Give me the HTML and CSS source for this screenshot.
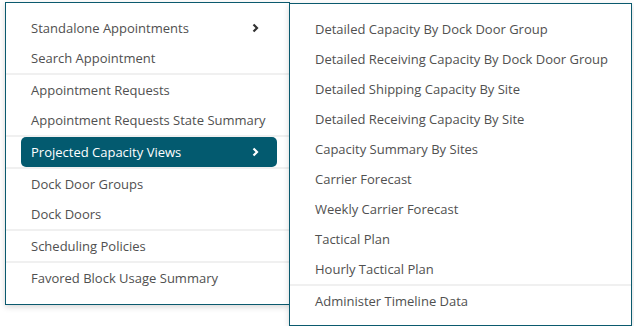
FILE: index.html
```html
<!DOCTYPE html>
<html lang="en">
<head>
    <meta charset="UTF-8">
    <meta name="viewport" content="width=device-width, initial-scale=1.0">
    <title>Appointments Menu</title>
    <link rel="stylesheet" href="styles.css">
</head>
<body>
    <div class="menu-wrap">
        <div class="menu main-menu">
            <div class="menu-group">
                <div class="menu-item">Standalone Appointments
                    <svg class="chevron" width="7" height="10" viewBox="0 0 7 10"><path d="M1.5 1.5 L5 5 L1.5 8.5" /></svg>
                </div>
                <div class="menu-item">Search Appointment</div>
            </div>
            <div class="menu-group">
                <div class="menu-item">Appointment Requests</div>
                <div class="menu-item">Appointment Requests State Summary</div>
            </div>
            <div class="menu-group">
                <div class="menu-item active">Projected Capacity Views
                    <svg class="chevron" width="7" height="10" viewBox="0 0 7 10"><path d="M1.5 1.5 L5 5 L1.5 8.5" /></svg>
                </div>
            </div>
            <div class="menu-group">
                <div class="menu-item">Dock Door Groups</div>
                <div class="menu-item">Dock Doors</div>
            </div>
            <div class="menu-group">
                <div class="menu-item">Scheduling Policies</div>
            </div>
            <div class="menu-group">
                <div class="menu-item">Favored Block Usage Summary</div>
            </div>
        </div>

        <!-- submenu for Projected Capacity Views -->
        <div class="menu sub-menu">
            <div class="menu-group">
                <div class="menu-item">Detailed Capacity By Dock Door Group</div>
                <div class="menu-item">Detailed Receiving Capacity By Dock Door Group</div>
                <div class="menu-item">Detailed Shipping Capacity By Site</div>
                <div class="menu-item">Detailed Receiving Capacity By Site</div>
                <div class="menu-item">Capacity Summary By Sites</div>
                <div class="menu-item">Carrier Forecast</div>
                <div class="menu-item">Weekly Carrier Forecast</div>
                <div class="menu-item">Tactical Plan</div>
                <div class="menu-item">Hourly Tactical Plan</div>
            </div>
            <div class="menu-group">
                <div class="menu-item">Administer Timeline Data</div>
            </div>
        </div>
    </div>
</body>
</html>
```

FILE: styles.css
```css
body {
    margin: 0;
    background-color: #ffffff;
    font-family: 'Open Sans', 'Liberation Sans', sans-serif;
    font-size: 13px;
    color: #505050;
}

.menu-wrap {
    display: flex;
    align-items: flex-start;
    padding: 2px 0 0 5px;
}

.menu {
    background-color: #ffffff;
    border: 1px solid #0b5a6e;
    box-shadow: 0 2px 6px rgba(0, 0, 0, 0.16);
    box-sizing: border-box;
}

.main-menu {
    width: 285px;
    padding: 10px 0 11px 0;
}

.sub-menu {
    width: 343px;
    margin-left: -1px;
    margin-top: 1px;
    padding: 10px 0 9px 0;
}

.menu-group + .menu-group {
    border-top: 2px solid #f0f0f0;
}

.menu-item {
    display: flex;
    align-items: center;
    justify-content: space-between;
    height: 30px;
    padding: 0 30px 0 25px;
    white-space: nowrap;
}

.chevron {
    fill: none;
    stroke: #333333;
    stroke-width: 2.2;
}

/* highlighted row with open submenu */
.menu-item.active {
    margin: 0 12px 0 15px;
    padding: 0 18px 0 10px;
    background-color: #035a6f;
    border-radius: 5px;
    color: #ffffff;
}

.menu-item.active .chevron {
    stroke: #ffffff;
}

.sub-menu .menu-item {
    padding-left: 25px;
}
```
